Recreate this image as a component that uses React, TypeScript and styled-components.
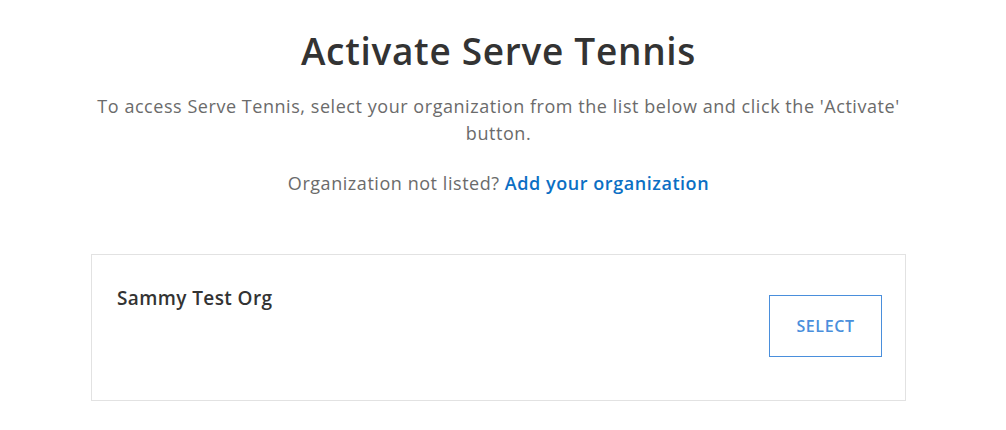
import React from "react";
import styled, { createGlobalStyle } from "styled-components";

const Global = createGlobalStyle`
  html, body { margin: 0; padding: 0; background: #fff; }
  body { font-family: "Open Sans", Lato, sans-serif; -webkit-font-smoothing: antialiased; }
`;

const Page = styled.main`
  width: 815px;
  margin-left: 91px;
  padding-top: 27px;
  display: flex;
  flex-direction: column;
  align-items: center;
`;

const Title = styled.h1`
  margin: 0;
  font-size: 37px;
  line-height: 48px;
  font-weight: 600;
  color: #333333;
  letter-spacing: 0.7px;
`;

const Lead = styled.p`
  margin: 18px 0 0;
  font-size: 18px;
  line-height: 27px;
  color: #6b6b6b;
  text-align: center;
  font-weight: 500;
  letter-spacing: 0.55px;
`;

const Note = styled.p`
  margin: 23px 0 0;
  font-size: 18px;
  line-height: 27px;
  color: #6b6b6b;
  text-align: center;
  font-weight: 500;
  letter-spacing: 0.55px;
`;

const Link = styled.a`
  color: #0b6fc4;
  text-decoration: none;
  font-weight: 600;
`;

const Card = styled.section`
  align-self: stretch;
  margin-top: 57px;
  height: 147px;
  box-sizing: border-box;
  border: 1px solid #e2e2e2;
  display: flex;
  justify-content: space-between;
  padding: 30px 23px 0 25px;
`;

const OrgName = styled.h2`
  margin: 0;
  font-size: 19px;
  line-height: 26px;
  font-weight: 600;
  color: #333333;
  letter-spacing: 0.4px;
`;

const SelectButton = styled.button`
  margin-top: 10px;
  width: 113px;
  height: 62px;
  box-sizing: border-box;
  border: 1px solid #4a8fdc;
  background: #fff;
  color: #4a8fdc;
  font-family: "Open Sans", sans-serif;
  font-size: 16px;
  font-weight: 600;
  letter-spacing: 0.6px;
  cursor: pointer;
`;

export default function App() {
  return (
    <>
      <Global />
      <Page>
        <Title>Activate Serve Tennis</Title>
        <Lead>
          To access Serve Tennis, select your organization from the list below and click the 'Activate'
          <br />
          button.
        </Lead>
        <Note>
          Organization not listed? <Link href="#">Add your organization</Link>
        </Note>
        <Card>
          <OrgName>Sammy Test Org</OrgName>
          <SelectButton>SELECT</SelectButton>
        </Card>
      </Page>
    </>
  );
}
